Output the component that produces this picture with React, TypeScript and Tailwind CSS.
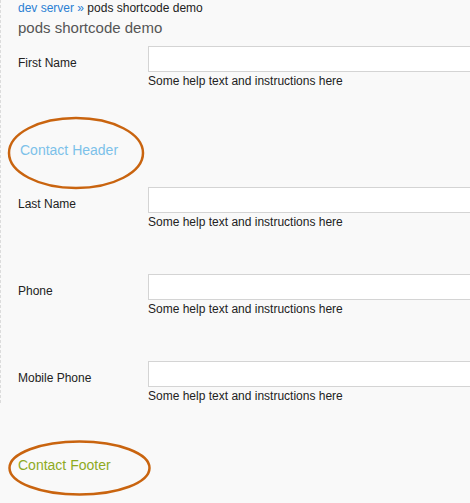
const fields = ["First Name", "Last Name", "Phone", "Mobile Phone"];

function Field({ label, first }: { label: string; first?: boolean }) {
  return (
    <div className={`flex items-start ${first ? "" : "mt-[45px]"}`}>
      <div className="w-[130px] shrink-0 pt-[10px] text-[12px] leading-[14px] text-[#222]">
        {label}
      </div>
      <div className="shrink-0">
        <input
          type="text"
          className="block h-[26px] w-[400px] border border-[#d4d4d4] bg-white outline-none"
        />
        <p className="mt-[2px] text-[12px] leading-[14px] text-[#222]">
          Some help text and instructions here
        </p>
      </div>
    </div>
  );
}

function Circled({
  text,
  color,
  box,
  children,
}: {
  text: string;
  color: string;
  box: string;
  children: React.ReactNode;
}) {
  return (
    <div className={`relative ${box}`}>
      <span className={`block text-[14px] leading-[18px] ${color}`}>{text}</span>
      {children}
    </div>
  );
}

export default function App() {
  return (
    <div className="h-[503px] w-full overflow-hidden bg-[#f9f9f9] font-['Liberation_Sans',Arial,sans-serif]">
      <div className="border-l border-dashed border-[#dcdcdc]">
        <div className="pl-[17px] pt-[1px] text-[12px] leading-[14px] text-[#222]">
          <span className="text-[#2b7fd3]">dev server »</span> pods shortcode demo
        </div>
        <h1 className="mt-[3px] pl-[17px] text-[15px] leading-[20px] text-[#555]">
          pods shortcode demo
        </h1>

        <div className="mt-[8px] pl-[17px]">
          <Field label={fields[0]} first />

          <Circled text="Contact Header" color="text-[#7cc1e9]" box="h-[99px] pt-[53px] pl-[2px]">
            <svg className="absolute left-[-11px] top-[28px]" width="138" height="74" viewBox="0 0 138 74">
              <ellipse cx="69" cy="37" rx="67" ry="35" fill="none" stroke="#c9640f" strokeWidth="2.5" />
            </svg>
          </Circled>

          <Field label={fields[1]} first />
          <Field label={fields[2]} />
          <Field label={fields[3]} />
        </div>
      </div>

      <div className="pl-[17px]">
        <Circled text="Contact Footer" color="text-[#8eaa1e]" box="h-[100px] pt-[53px] pl-[1px]">
          <svg className="absolute left-[-9px] top-[37px]" width="143" height="56" viewBox="0 0 143 56">
            <ellipse cx="71.5" cy="28" rx="70" ry="26.5" fill="none" stroke="#c9640f" strokeWidth="2.5" />
          </svg>
        </Circled>
      </div>
    </div>
  );
}
